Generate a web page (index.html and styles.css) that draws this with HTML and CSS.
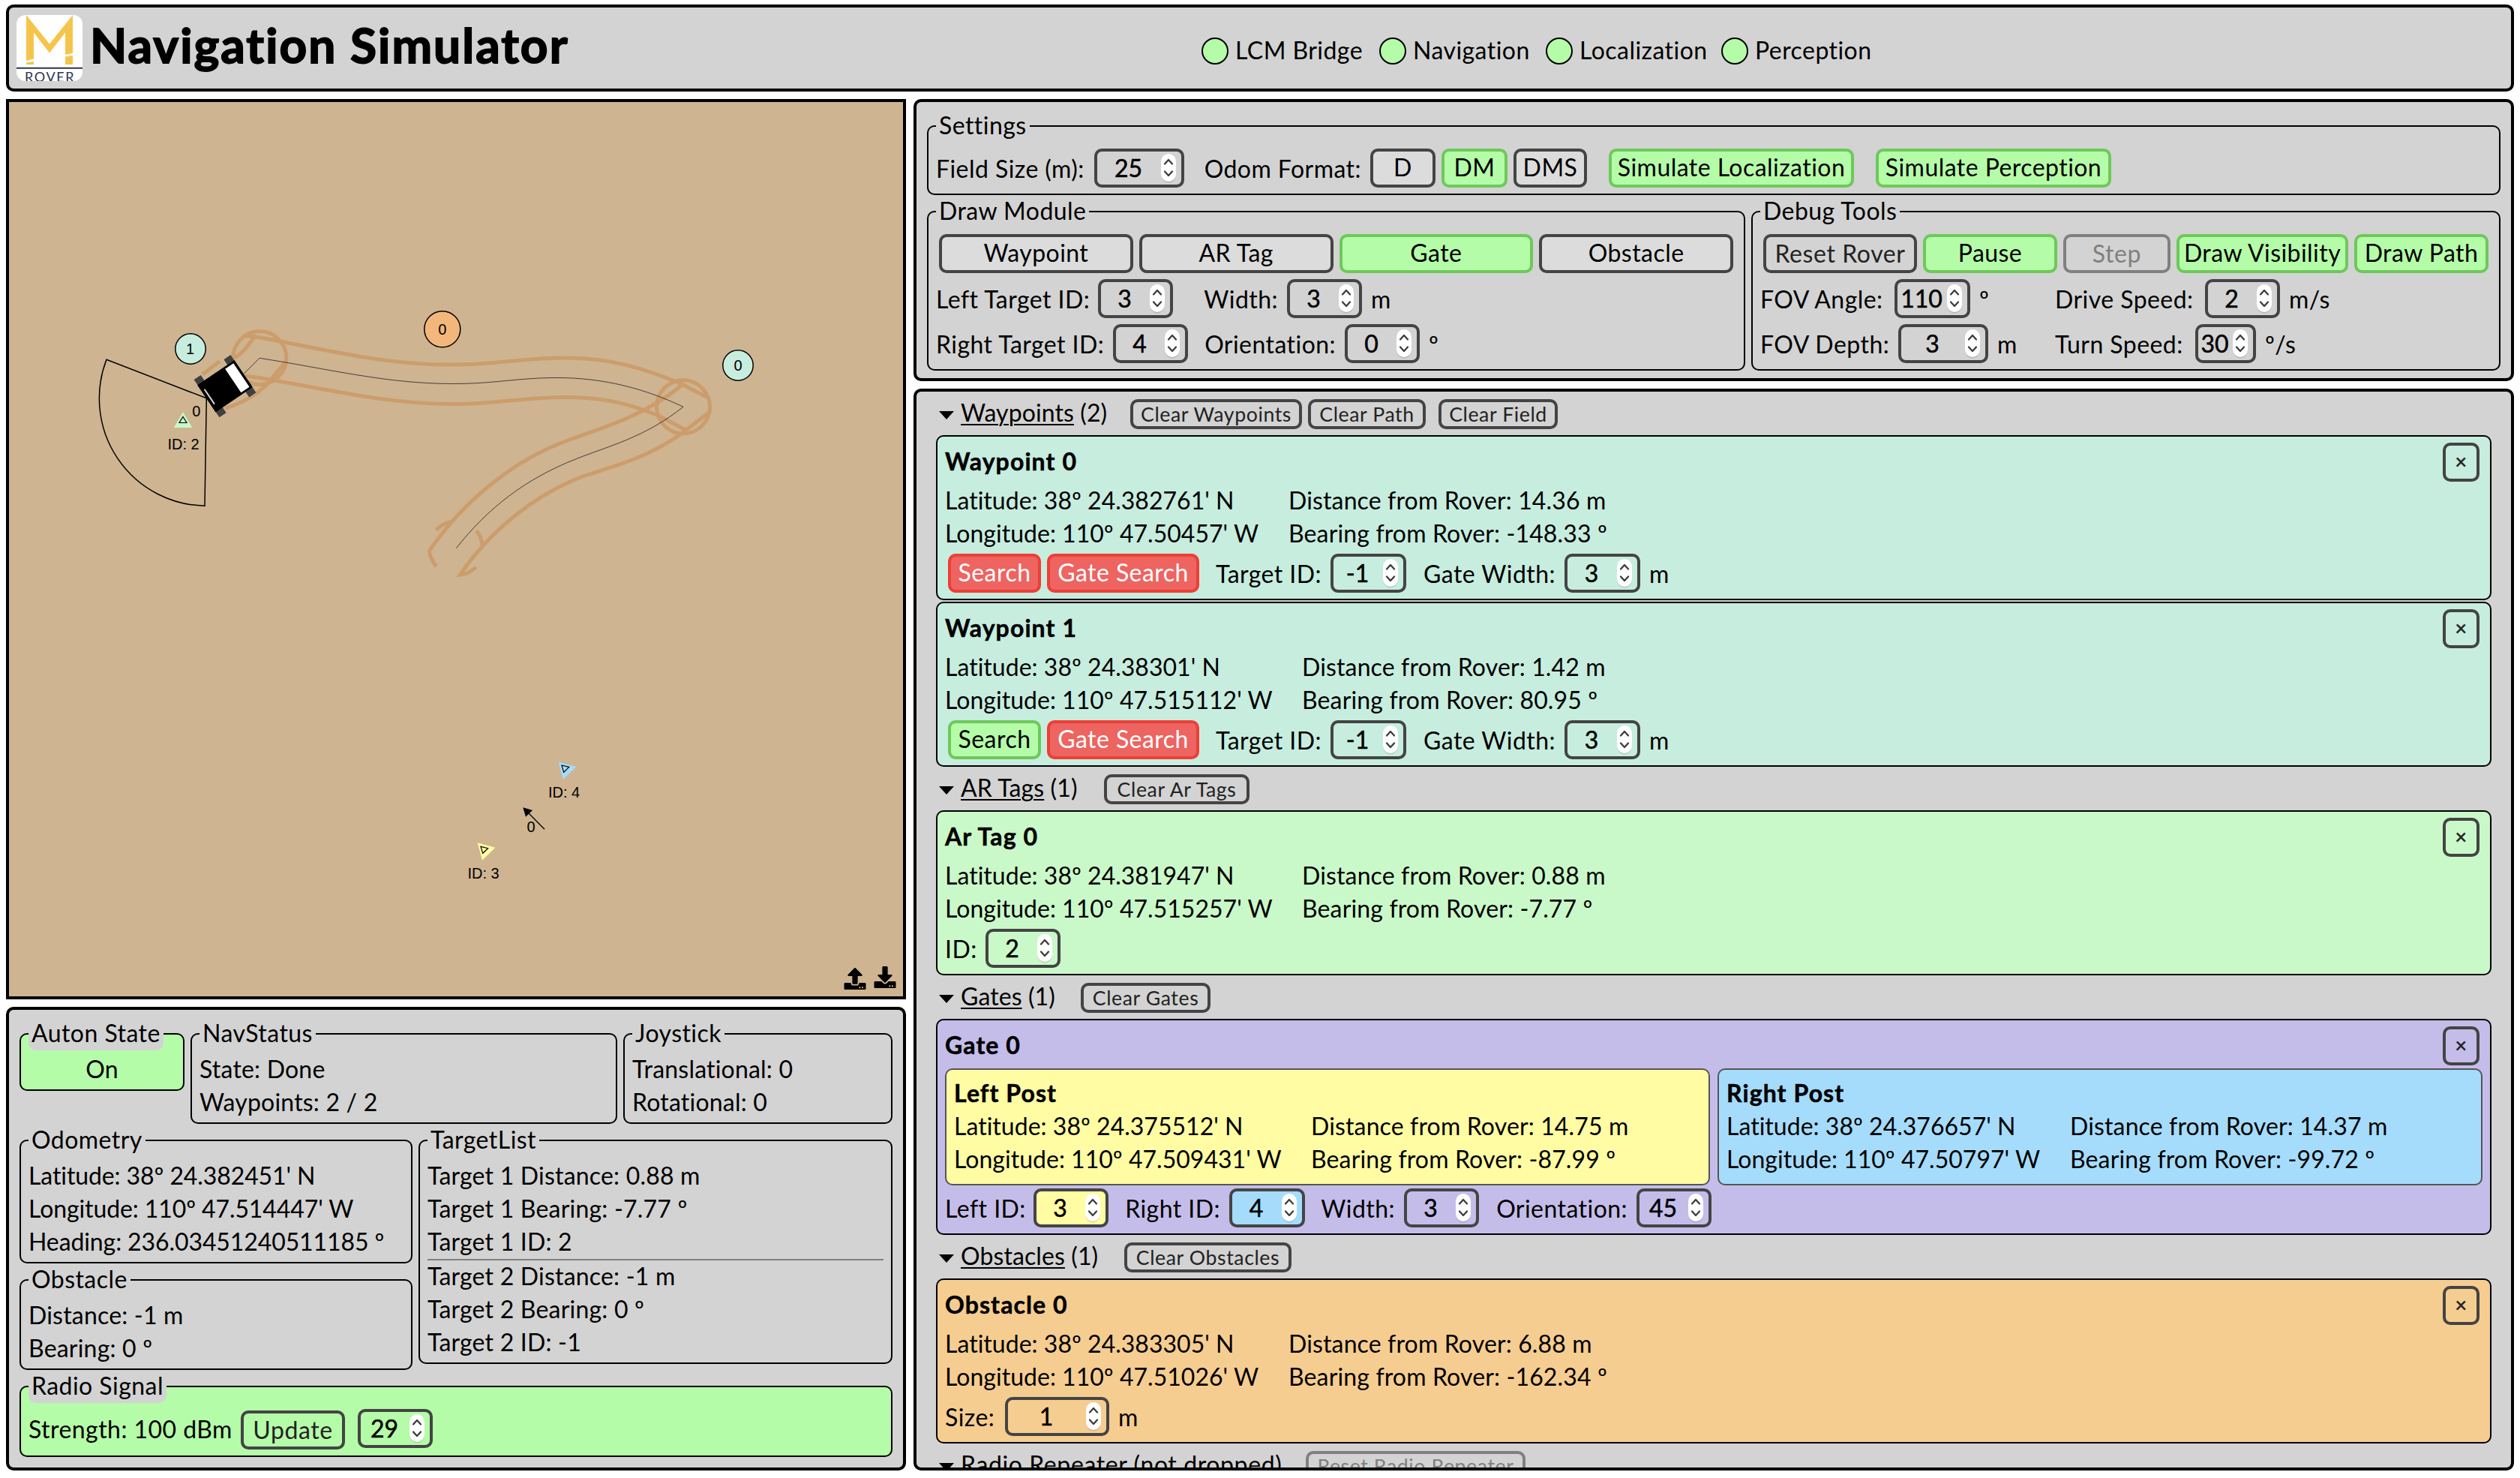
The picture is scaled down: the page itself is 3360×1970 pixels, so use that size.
FILE: index.html
```
<!DOCTYPE html>
<html lang="en">
<head>
<meta charset="utf-8">
<title>Navigation Simulator</title>
<link rel="stylesheet" href="styles.css">
</head>
<body>
<svg class="symbols" aria-hidden="true">
  <symbol id="spin" viewBox="0 0 24 42">
    <rect x="2" y="3.5" width="20" height="37" rx="10" fill="#000" opacity=".13"/>
    <rect x="2" y="2" width="20" height="37" rx="10" fill="#fff"/>
    <path d="M7 15.5 12 10l5 5.5M7 25.5 12 31l5-5.5" fill="none" stroke="#3c3c3c" stroke-width="2.3" stroke-linecap="round" stroke-linejoin="round"/>
  </symbol>
</svg>

<header class="header box">
  <svg class="logo" viewBox="0 0 88 88">
    <rect width="88" height="88" fill="#fff"/>
    <g fill="#f5c54b">
      <path d="M13 0 44 38.500 75 0V51L65 53V23.500L44 50.500 23 23.500V58.500L13 61Z"/>
      <path d="M13 63.500 23 62V66H13ZM65 55.500 75 54V66H65Z"/>
    </g>
    <path d="M0 70.700H88" stroke="#2b3453" stroke-width="1.900"/>
    <text x="11" y="88.500" textLength="66" font-family="Lato, sans-serif" font-size="18" fill="#2b3453">ROVER</text>
  </svg>
  <h1 class="title">Navigation Simulator</h1>
  <div class="status">
    <div class="status-item"><i class="led"></i><span>LCM Bridge</span></div>
    <div class="status-item"><i class="led"></i><span>Navigation</span></div>
    <div class="status-item"><i class="led"></i><span>Localization</span></div>
    <div class="status-item"><i class="led"></i><span>Perception</span></div>
  </div>
</header>

<main class="main">
  <section class="left">
    <div class="field">
      <svg class="map" viewBox="12 136 1192 1192">
        <g class="track">
          <path d="M325 447.500 345 449.500C440 467 515 487 606 486 660 486 700 477 753 477 812 477 858 490 910 512.500L942 529"/>
          <path d="M326.700 501 345 503.500C440 519 515 539 606 538.500 660 538.500 700 529.500 753 529.500 812 529.500 850 542 880 555L914 573"/>
          <circle cx="911" cy="542.300" r="35.500"/>
          <path d="M910 512.500C860 555 800 571 757 587 688 612 620 665 572.300 734.300Q574 745 581.700 755"/>
          <path d="M945 550 907 579C860 612 815 622 780 634 712 658 650 712 613.500 766Q625 765 634.700 756"/>
          <path d="M581.700 706.700Q590 697.500 601.700 695.500M635 707.300Q642 715 643.500 728"/>
          <circle cx="346.300" cy="477" r="35.500"/>
          <path d="M341 446.500C331 459 326 470 313 476.500M293 481.700Q283 489 270 499"/>
          <path d="M381 482C372 493 365 501 357 511 341 528 322 537 300 544.500"/>
        </g>
        <path class="trail" d="M325 498.300 346 477.300C440 492 515 511.500 604 511.500 660 511.500 690 503.500 743 503.500 805 503.500 860 518 911 542.300 860 583 810 595 770 611 700 638 650 678 608.300 730.700"/>
        <path d="M275.300 530.800 142 479.300A143.300 143.300 0 0 0 273 674.200Z" fill="none" stroke="#000" stroke-width="1.500"/>
        <g stroke="#000" stroke-width="1.500">
          <circle cx="254" cy="465" r="20.200" fill="#c7eddf"/>
          <circle cx="984" cy="487" r="20.200" fill="#c7eddf"/>
          <circle cx="589.800" cy="438.800" r="24" fill="#f4b77b"/>
        </g>
        <path d="M244 549 256.300 570H231.700Z" fill="#c8f7c8"/>
        <path class="thin" d="M244 555.500 249 563.500H239Z"/>
        <g transform="translate(300 514.700) rotate(-34)">
          <path d="M-29.500-30.300h11v8.800h-11zM18.500-30.300h11v8.800h-11zM-29.500 21.500h11v8.800h-11zM18.500 21.500h11v8.800h-11z" fill="#404040"/>
          <rect x="-29.800" y="-21.800" width="59.600" height="43.600"/>
          <rect x="13" y="-19" width="13.400" height="38" fill="#fff"/>
          <path d="M-25-12V12" stroke="#d3d3d3" stroke-width="2"/>
        </g>
        <path d="M744.700 1015.700 768.300 1022 750.700 1039Z" fill="#a5dcfc"/>
        <path class="thin" d="M749 1020 758.700 1022.300 751.700 1029.300Z"/>
        <path d="M636.700 1123.300 660.300 1129.700 643 1146.700Z" fill="#fffca3"/>
        <path class="thin" d="M641 1128.300 650.700 1130.700 643.700 1137.300Z"/>
        <path d="M726 1105.300 704 1083" stroke="#000" stroke-width="1.300"/>
        <path d="M697.300 1076.300 710 1080 701 1088.700Z"/>
        <g class="map-label">
          <text x="253.500" y="471.700">1</text>
          <text x="984" y="494">0</text>
          <text x="589.800" y="446">0</text>
          <text x="261.800" y="554.700">0</text>
          <text x="244.500" y="599">ID: 2</text>
          <text x="752" y="1063.300">ID: 4</text>
          <text x="644.500" y="1171.300">ID: 3</text>
          <text x="708" y="1109.300">0</text>
        </g>
      </svg>
      <div class="field-icons">
        <svg class="upload" viewBox="0 0 512 512"><path d="M296 384h-80c-13.300 0-24-10.700-24-24V192h-87.700c-17.800 0-26.700-21.500-14.100-34.100L242.300 5.700c7.500-7.500 19.800-7.500 27.300 0l152.200 152.200c12.600 12.600 3.700 34.100-14.100 34.100H320v168c0 13.300-10.700 24-24 24zm216-8v112c0 13.300-10.700 24-24 24H24c-13.300 0-24-10.700-24-24V376c0-13.300 10.700-24 24-24h136v8c0 30.900 25.100 56 56 56h80c30.900 0 56-25.100 56-56v-8h136c13.300 0 24 10.700 24 24zm-124 88c0-11-9-20-20-20s-20 9-20 20 9 20 20 20 20-9 20-20zm64 0c0-11-9-20-20-20s-20 9-20 20 9 20 20 20 20-9 20-20z"/></svg>
        <svg class="download" viewBox="0 0 512 512"><path d="M216 0h80c13.300 0 24 10.700 24 24v168h87.700c17.800 0 26.700 21.500 14.100 34.100L269.700 378.300c-7.500 7.500-19.800 7.500-27.300 0L90.100 226.100c-12.600-12.600-3.700-34.100 14.100-34.100H192V24c0-13.300 10.700-24 24-24zm296 376v112c0 13.300-10.700 24-24 24H24c-13.300 0-24-10.700-24-24V376c0-13.300 10.700-24 24-24h146.700l49 49c20.100 20.100 52.500 20.100 72.600 0l49-49H488c13.300 0 24 10.700 24 24zm-124 88c0-11-9-20-20-20s-20 9-20 20 9 20 20 20 20-9 20-20zm64 0c0-11-9-20-20-20s-20 9-20 20 9 20 20 20 20-9 20-20z"/></svg>
      </div>
    </div>

    <div class="telemetry box">
      <div class="tele-top">
        <fieldset class="group green"><legend>Auton State</legend><p class="center">On</p></fieldset>
        <fieldset class="group"><legend>NavStatus</legend><p>State: Done</p><p>Waypoints: 2 / 2</p></fieldset>
        <fieldset class="group"><legend>Joystick</legend><p>Translational: 0</p><p>Rotational: 0</p></fieldset>
      </div>
      <div class="tele-mid">
        <div>
          <fieldset class="group"><legend>Odometry</legend><p class="num-line">Latitude: 38º 24.382451' N</p><p class="num-line">Longitude: 110º 47.514447' W</p><p class="num-line">Heading: 236.03451240511185 º</p></fieldset>
          <fieldset class="group"><legend>Obstacle</legend><p>Distance: -1 m</p><p>Bearing: 0 º</p></fieldset>
        </div>
        <fieldset class="group"><legend>TargetList</legend><p>Target 1 Distance: 0.88 m</p><p>Target 1 Bearing: -7.77 º</p><p>Target 1 ID: 2</p><hr><p>Target 2 Distance: -1 m</p><p>Target 2 Bearing: 0 º</p><p>Target 2 ID: -1</p></fieldset>
      </div>
      <fieldset class="group green"><legend>Radio Signal</legend>
        <div class="radio-row">
          <span class="label">Strength: 100 dBm</span>
          <button class="btn plain">Update</button>
          <div class="num"><span>29</span><svg><use href="#spin"/></svg></div>
        </div>
      </fieldset>
    </div>
  </section>

  <section class="right">
    <div class="controls box">
      <fieldset class="group roomy"><legend>Settings</legend>
        <div class="row settings-row">
          <span class="label">Field Size (m):</span>
          <div class="num"><span>25</span><svg><use href="#spin"/></svg></div>
          <span class="label end">Odom Format:</span>
          <button class="btn">D</button>
          <button class="btn on">DM</button>
          <button class="btn">DMS</button>
          <button class="btn on wide">Simulate Localization</button>
          <button class="btn on">Simulate Perception</button>
        </div>
      </fieldset>
      <div class="control-cols">
        <fieldset class="group roomy"><legend>Draw Module</legend>
          <div class="draw-buttons">
            <button class="btn">Waypoint</button><button class="btn">AR Tag</button><button class="btn on">Gate</button><button class="btn">Obstacle</button>
          </div>
          <div class="row draw-row-a">
            <span class="label">Left Target ID:</span>
            <div class="num"><span>3</span><svg><use href="#spin"/></svg></div>
            <span class="label end">Width:</span>
            <div class="num"><span>3</span><svg><use href="#spin"/></svg></div>
            <span class="unit">m</span>
          </div>
          <div class="row draw-row-b">
            <span class="label">Right Target ID:</span>
            <div class="num"><span>4</span><svg><use href="#spin"/></svg></div>
            <span class="label end">Orientation:</span>
            <div class="num"><span>0</span><svg><use href="#spin"/></svg></div>
            <span class="unit">º</span>
          </div>
        </fieldset>
        <fieldset class="group roomy"><legend>Debug Tools</legend>
          <div class="debug-buttons">
            <button class="btn plain">Reset Rover</button><button class="btn on">Pause</button><button class="btn plain off">Step</button><button class="btn on">Draw Visibility</button><button class="btn on">Draw Path</button>
          </div>
          <div class="row debug-row-a">
            <span class="label">FOV Angle:</span>
            <div class="num"><span>110</span><svg><use href="#spin"/></svg></div>
            <span class="unit">º</span>
            <span class="label">Drive Speed:</span>
            <div class="num"><span>2</span><svg><use href="#spin"/></svg></div>
            <span class="unit">m/s</span>
          </div>
          <div class="row debug-row-b">
            <span class="label">FOV Depth:</span>
            <div class="num"><span>3</span><svg><use href="#spin"/></svg></div>
            <span class="unit">m</span>
            <span class="label">Turn Speed:</span>
            <div class="num"><span>30</span><svg><use href="#spin"/></svg></div>
            <span class="unit">º/s</span>
          </div>
        </fieldset>
      </div>
    </div>

    <div class="items box">
      <div class="summary sum-waypoints">
        <i class="tri"></i><span><u>Waypoints</u> (2)</span>
        <button class="btn small">Clear Waypoints</button><button class="btn small">Clear Path</button><button class="btn small">Clear Field</button>
      </div>
      <article class="card waypoint">
        <div class="card-head"><h2>Waypoint 0</h2><button class="btn close">×</button></div>
        <div class="coords narrow"><p>Latitude: 38º 24.382761' N</p><p>Distance from Rover: 14.36 m</p><p>Longitude: 110º 47.50457' W</p><p>Bearing from Rover: -148.33 º</p></div>
        <div class="row waypoint-row">
          <button class="btn red">Search</button><button class="btn red">Gate Search</button>
          <span class="label end">Target ID:</span>
          <div class="num"><span>-1</span><svg><use href="#spin"/></svg></div>
          <span class="label end">Gate Width:</span>
          <div class="num"><span>3</span><svg><use href="#spin"/></svg></div>
          <span class="unit">m</span>
        </div>
      </article>
      <article class="card waypoint">
        <div class="card-head"><h2>Waypoint 1</h2><button class="btn close">×</button></div>
        <div class="coords"><p>Latitude: 38º 24.38301' N</p><p>Distance from Rover: 1.42 m</p><p>Longitude: 110º 47.515112' W</p><p>Bearing from Rover: 80.95 º</p></div>
        <div class="row waypoint-row">
          <button class="btn on">Search</button><button class="btn red">Gate Search</button>
          <span class="label end">Target ID:</span>
          <div class="num"><span>-1</span><svg><use href="#spin"/></svg></div>
          <span class="label end">Gate Width:</span>
          <div class="num"><span>3</span><svg><use href="#spin"/></svg></div>
          <span class="unit">m</span>
        </div>
      </article>

      <div class="summary sum-tags">
        <i class="tri"></i><span><u>AR Tags</u> (1)</span>
        <button class="btn small">Clear Ar Tags</button>
      </div>
      <article class="card tag">
        <div class="card-head"><h2>Ar Tag 0</h2><button class="btn close">×</button></div>
        <div class="coords"><p>Latitude: 38º 24.381947' N</p><p>Distance from Rover: 0.88 m</p><p>Longitude: 110º 47.515257' W</p><p>Bearing from Rover: -7.77 º</p></div>
        <div class="row tag-row">
          <span class="label">ID:</span>
          <div class="num"><span>2</span><svg><use href="#spin"/></svg></div>
        </div>
      </article>

      <div class="summary sum-gates">
        <i class="tri"></i><span><u>Gates</u> (1)</span>
        <button class="btn small">Clear Gates</button>
      </div>
      <article class="card gate">
        <div class="card-head"><h2>Gate 0</h2><button class="btn close">×</button></div>
        <div class="posts">
          <div class="post yellow">
            <h3>Left Post</h3>
            <div class="coords"><p>Latitude: 38º 24.375512' N</p><p>Distance from Rover: 14.75 m</p><p>Longitude: 110º 47.509431' W</p><p>Bearing from Rover: -87.99 º</p></div>
          </div>
          <div class="post blue">
            <h3>Right Post</h3>
            <div class="coords narrow"><p>Latitude: 38º 24.376657' N</p><p>Distance from Rover: 14.37 m</p><p>Longitude: 110º 47.50797' W</p><p>Bearing from Rover: -99.72 º</p></div>
          </div>
        </div>
        <div class="row gate-row">
          <span class="label">Left ID:</span>
          <div class="num yellow"><span>3</span><svg><use href="#spin"/></svg></div>
          <span class="label end">Right ID:</span>
          <div class="num blue"><span>4</span><svg><use href="#spin"/></svg></div>
          <span class="label end">Width:</span>
          <div class="num"><span>3</span><svg><use href="#spin"/></svg></div>
          <span class="label end">Orientation:</span>
          <div class="num"><span>45</span><svg><use href="#spin"/></svg></div>
        </div>
      </article>

      <div class="summary sum-obstacles">
        <i class="tri"></i><span><u>Obstacles</u> (1)</span>
        <button class="btn small">Clear Obstacles</button>
      </div>
      <article class="card obstacle">
        <div class="card-head"><h2>Obstacle 0</h2><button class="btn close">×</button></div>
        <div class="coords narrow"><p>Latitude: 38º 24.383305' N</p><p>Distance from Rover: 6.88 m</p><p>Longitude: 110º 47.51026' W</p><p>Bearing from Rover: -162.34 º</p></div>
        <div class="row obstacle-row">
          <span class="label">Size:</span>
          <div class="num"><span>1</span><svg><use href="#spin"/></svg></div>
          <span class="unit">m</span>
        </div>
      </article>

      <div class="summary sum-radio">
        <i class="tri"></i><span><u>Radio Repeater</u> (not dropped)</span>
        <button class="btn small off">Reset Radio Repeater</button>
      </div>
    </div>
  </section>
</main>
</body>
</html>
```
FILE: styles.css
```
* { box-sizing: border-box; }

body {
  margin: 0;
  width: 3360px;
  height: 1970px;
  padding: 6px 8px 10px;
  display: flex;
  flex-direction: column;
  gap: 10px;
  overflow: hidden;
  background: #fff;
  color: #000;
  font: 32px/41px Lato, sans-serif;
  letter-spacing: .45px;
  white-space: nowrap;
}

p, h1, h2, h3 { margin: 0; }
.symbols { position: absolute; width: 0; height: 0; }

.box {
  background: #d3d3d3;
  border: 4px solid #000;
  border-radius: 10px;
}

/* Header */
.header {
  height: 116px;
  padding: 10px;
  display: flex;
  align-items: flex-start;
}
.logo { width: 88px; height: 88px; border-radius: 12px; flex: none; }
.title {
  width: 1492px;
  padding-left: 10px;
  font-size: 64px;
  font-weight: 700;
  line-height: 80px;
  letter-spacing: 2.050px;
  -webkit-text-stroke: 1.8px #000;
}
.status {
  display: grid;
  grid-template-columns: 237px 222px 234px auto;
  padding-top: 26px;
}
.status-item { display: flex; align-items: center; gap: 9px; height: 44px; }
.status-item span { padding-bottom: 3px; }
.led {
  width: 36px;
  height: 36px;
  border: 2px solid #000;
  border-radius: 10px / 50%;
  border-radius: 50%;
  background: #b5fca8;
}

/* Columns */
.main {
  display: grid;
  grid-template-columns: 1200px 2134px;
  gap: 10px;
  height: 1828px;
}
.left { display: grid; grid-template-rows: 1200px 618px; gap: 10px; }
.right { display: grid; grid-template-rows: 376px 1442px; gap: 10px; }

/* Field map */
.field { position: relative; border: 4px solid #000; background: #ceb491; }
.map { display: block; width: 1192px; height: 1192px; }
.track { fill: none; stroke: #cc9d6b; stroke-width: 5; }
.trail { fill: none; stroke: #000; stroke-width: 1; stroke-opacity: .65; }
.thin { fill: none; stroke: #000; stroke-width: 1.2; }
.map-label { font: 20px "Liberation Sans", sans-serif; text-anchor: middle; letter-spacing: 0; }
.field-icons {
  position: absolute;
  right: 9px;
  bottom: 9px;
  display: flex;
  gap: 10px;
}
.field-icons svg { width: 30px; height: 29px; }
.download { margin-top: -2px; }

/* Grouped boxes */
.group {
  min-width: 0;
  margin: 0;
  padding: 4px 10px;
  border: 2px solid #000;
  border-radius: 10px;
}
.group legend {
  height: 44px;
  padding: 0 4px;
  line-height: 42px;
  background: #d3d3d3;
  border-radius: 10px;
}
.group.roomy { padding: 8px 10px; }
.group p { height: 44px; }
.group .center { text-align: center; }
.group hr { height: 2px; margin: 0; border: 0; background: #808080; }
.green { background: #b5fca8; }
p { letter-spacing: .2px; }
.group .num-line { letter-spacing: -.1px; }

.telemetry { padding: 10px 14px; }
.tele-top {
  display: grid;
  grid-template-columns: 220px 569px 359px;
  gap: 8px;
  align-items: start;
}
.tele-mid {
  display: grid;
  grid-template-columns: 524px 632px;
  gap: 8px;
  align-items: start;
}
.radio-row {
  height: 62px;
  display: grid;
  grid-template-columns: 283px 139px 100px;
  align-items: start;
}
.radio-row .label { padding-top: 8px; }
.radio-row .btn { margin-top: 6px; }
.radio-row .num { margin: 4px -17px 0 17px; }

/* Buttons and number inputs */
.btn {
  height: 52px;
  padding: 0;
  display: flex;
  justify-content: center;
  align-items: flex-start;
  border: 4px solid #444;
  border-radius: 10px;
  background: #dcdcdc;
  color: #000;
  font: 32px/41px Lato, sans-serif;
  letter-spacing: .45px;
  white-space: nowrap;
}
.btn.on { background: #b5fca8; border-color: #6dc95a; }
.btn.red { background: #ed6461; border-color: #ef3e36; color: #fff; }
.btn.plain { background: transparent; color: #222; line-height: 43px; letter-spacing: .6px; }
.btn.small { height: 40px; background: transparent; color: #222; font-size: 26.67px; line-height: 32px; letter-spacing: .6px; }
.btn.off { border-color: #808080; color: #808080; }
.btn.close {
  width: 49px;
  margin-right: 4px;
  background: transparent;
  color: #222;
  font-size: 26.67px;
  line-height: 42px;
  -webkit-text-stroke: .6px #222;
}
.num {
  height: 52px;
  display: flex;
  align-items: center;
  border: 4px solid #444;
  border-radius: 10px;
  line-height: 44px;
  letter-spacing: 0;
  -webkit-text-stroke: .5px #000;
}
.num span { flex: 1; text-align: center; }
.num svg { width: 24px; height: 42px; margin-right: 5px; flex: none; overflow: visible; }
.label, .unit { line-height: 45px; }
.label.end { text-align: right; padding-right: 12px; }
.unit { padding-left: 12px; }
.row { display: grid; align-items: center; height: 52px; }

/* Settings panel */
.controls { padding: 10px 14px; }
.control-cols { display: grid; grid-template-columns: 1091px 999px; gap: 8px; }
.settings-row {
  grid-template-columns: 211px 120px 248px 87px 88px 98px 327px 314px;
}
.settings-row .btn:nth-of-type(2) { margin: 0 -8px 0 8px; }
.settings-row .btn:nth-of-type(3) { margin: 0 -16px 0 16px; }
.settings-row .btn:nth-of-type(4) { margin: 0 -45px 0 45px; }
.settings-row .btn:nth-of-type(5) { margin: 0 -74px 0 74px; }
.draw-buttons, .debug-buttons { display: grid; gap: 8px; padding: 0 4px; }
.draw-buttons { grid-template-columns: repeat(4, 1fr); }
.debug-buttons { grid-template-columns: 205px 179px 143px 229px 179px; }
.draw-row-a, .draw-row-b, .debug-row-a, .debug-row-b { margin-top: 8px; }
.draw-row-a { grid-template-columns: 216px 100px 152px 100px auto; }
.draw-row-b { grid-template-columns: 236px 100px 209px 100px auto; }
.debug-row-a { grid-template-columns: 179px 101px 113px 200px 100px auto; }
.debug-row-b { grid-template-columns: 184px 120px 89px 187px 81px auto; }

/* Item list */
.items { padding: 0 26px; overflow: hidden; }
.summary {
  display: grid;
  height: 58px;
  align-items: start;
  column-gap: 8px;
}
.summary span { margin-top: 7px; letter-spacing: .1px; }
.summary u { text-decoration-thickness: 2px; text-underline-offset: 3px; text-decoration-skip-ink: auto; }
.summary .btn { margin-top: 10px; }
.tri {
  width: 0;
  height: 0;
  margin: 26px 0 0 4px;
  border: 10px solid transparent;
  border-top: 11px solid #000;
  border-bottom: 0;
}
.sum-waypoints { grid-template-columns: 25px 218px 229px 157px 168px; }
.sum-waypoints .btn:last-child { margin-left: 9px; }
.sum-tags { grid-template-columns: 25px 183px 194px; }
.sum-gates { grid-template-columns: 25px 152px 173px; }
.sum-obstacles { grid-template-columns: 25px 210px 223px; }
.sum-radio { grid-template-columns: 25px 452px 293px; }
.sum-radio span { letter-spacing: .6px; }

.card {
  padding: 8px 10px;
  border: 2px solid #000;
  border-radius: 10px;
}
.card + .card { margin-top: 2px; }
.card-head { display: flex; justify-content: space-between; height: 52px; margin-bottom: 4px; }
.card h2, .post h3 {
  font-size: 32px;
  font-weight: 700;
  letter-spacing: 1.1px;
  -webkit-text-stroke: .5px #000;
}
.card h2 { margin-top: 4px; }
.waypoint { background: #c7eddf; }
.tag { background: #caf9c9; }
.gate { background: #c5bde9; }
.obstacle { background: #f6cd90; }
.yellow { background: #fffca3; }
.blue { background: #a5dcfc; }

.coords {
  display: grid;
  grid-template-columns: 476px auto;
  grid-auto-rows: 44px;
}
.coords.narrow { grid-template-columns: 458px auto; }
.coords p { letter-spacing: .02px; }
.coords p:nth-child(even) { letter-spacing: .14px; }
.card > .row { margin-top: 4px; }
.waypoint-row { margin-left: 4px; grid-template-columns: 132px 203px 175px 101px 211px 101px auto; }
.waypoint-row .btn:first-child { margin-right: 8px; }
.tag-row { grid-template-columns: 54px 100px; }
.obstacle-row { grid-template-columns: 80px 139px auto; }
.posts { display: grid; grid-template-columns: 1020px 1020px; gap: 10px; }
.post {
  height: 156px;
  padding: 10px;
  border: 2px solid #555;
  border-radius: 10px;
}
.post h3 { height: 44px; }
.gate-row { grid-template-columns: 118px 100px 161px 101px 132px 100px 210px 100px; }
```
